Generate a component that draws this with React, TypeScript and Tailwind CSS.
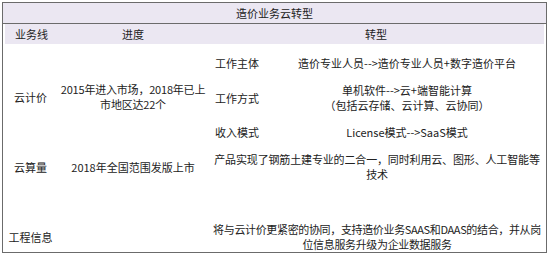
const font = { fontFamily: '"Noto Sans CJK SC", "Noto Sans", sans-serif' };

const modes = [
  { label: "工作主体", text: ["造价专业人员-->造价专业人员+数字造价平台"], h: "h-[38px]" },
  { label: "工作方式", text: ["单机软件-->云+端智能计算", "（包括云存储、云计算、云协同）"], h: "h-[32px]" },
  { label: "收入模式", text: ["License模式-->SaaS模式"], h: "h-[36px]" },
];

export default function App() {
  return (
    <div className="w-[554px] h-[256px] bg-white pt-[2px] pl-[2px]" style={font}>
      <div className="w-[545px] h-[251px] border border-[#6b6b6b] flex flex-col text-[11px] leading-[15px] text-[#222222]">
        {/* Title */}
        <div className="h-[21px] shrink-0 bg-[#ebe7f2] border-b border-[#6b6b6b] flex items-center justify-center">
          造价业务云转型
        </div>

        {/* Column headers */}
        <div className="h-[20px] shrink-0 mx-[2px] bg-[#ebe7f2] grid grid-cols-[53px_150px_1fr] items-center text-center">
          <span>业务线</span>
          <span>进度</span>
          <span>转型</span>
        </div>

        {/* 云计价 */}
        <div className="grid grid-cols-[55px_150px_1fr] items-center text-center">
          <span>云计价</span>
          <span className="whitespace-nowrap tracking-[-0.2px]">
            2015年进入市场，2018年已上
            <br />
            市地区达22个
          </span>
          <div className="flex flex-col">
            {modes.map((m) => (
              <div key={m.label} className={`${m.h} grid grid-cols-[60px_1fr] items-center`}>
                <span className="text-left pl-[7px]">{m.label}</span>
                <span className="whitespace-nowrap">
                  {m.text.map((t, i) => (
                    <span key={i} className="block">
                      {t}
                    </span>
                  ))}
                </span>
              </div>
            ))}
          </div>
        </div>

        {/* 云算量 */}
        <div className="h-[34px] grid grid-cols-[55px_150px_1fr] items-center text-center">
          <span>云算量</span>
          <span>2018年全国范围发版上市</span>
          <span className="whitespace-nowrap tracking-[-0.15px]">
            产品实现了钢筋土建专业的二合一，同时利用云、图形、人工智能等
            <br />
            技术
          </span>
        </div>

        {/* 工程信息 */}
        <div className="flex-1 flex flex-col justify-end">
          <div className="grid grid-cols-[55px_150px_1fr] items-center text-center">
            <span>工程信息</span>
            <span />
            <span className="whitespace-nowrap tracking-[-0.35px]">
              将与云计价更紧密的协同，支持造价业务SAAS和DAAS的结合，并从岗
              <br />
              位信息服务升级为企业数据服务
            </span>
          </div>
        </div>
      </div>
    </div>
  );
}
